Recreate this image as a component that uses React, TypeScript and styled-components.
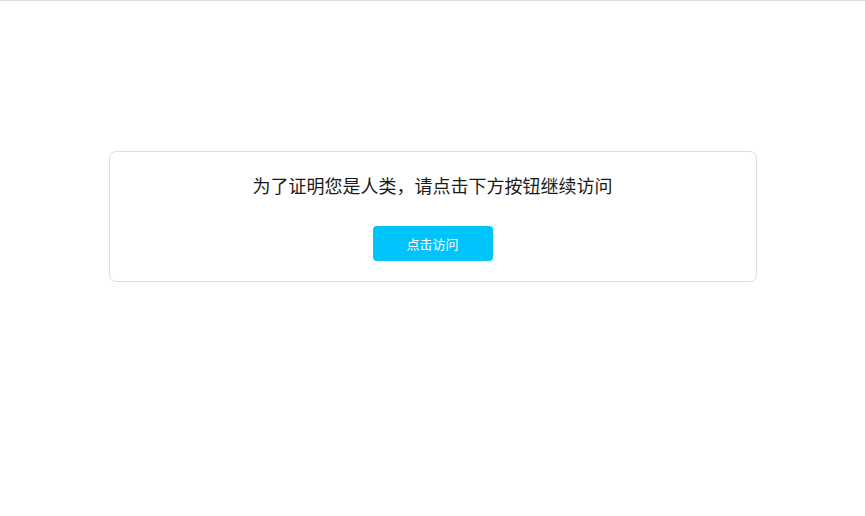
import React from 'react';
import styled, { createGlobalStyle } from 'styled-components';

const GlobalStyle = createGlobalStyle`
  html, body {
    margin: 0;
    padding: 0;
    background: #fff;
  }
  body {
    font-family: "Noto Sans CJK SC", "Noto Sans", sans-serif;
    border-top: 1px solid #dcdcdc;
  }
`;

const Page = styled.div`
  display: flex;
  justify-content: center;
  padding-top: 150px;
  height: 515px;
  box-sizing: border-box;
`;

const Card = styled.div`
  width: 648px;
  height: 131px;
  box-sizing: border-box;
  border: 1px solid #dedede;
  border-radius: 7px;
  display: flex;
  flex-direction: column;
  align-items: center;
  padding-top: 20px;
`;

const Message = styled.p`
  margin: 0;
  font-size: 18px;
  line-height: 26px;
  color: #1a1a1a;
`;

const VisitButton = styled.button`
  margin-top: 28px;
  width: 120px;
  height: 35px;
  border: none;
  border-radius: 4px;
  background: #00c3fb;
  color: #fff;
  font-family: "Noto Sans CJK SC", sans-serif;
  font-size: 13px;
  cursor: pointer;
`;

export default function App() {
  return (
    <>
      <GlobalStyle />
      <Page>
        <Card>
          <Message>为了证明您是人类，请点击下方按钮继续访问</Message>
          <VisitButton>点击访问</VisitButton>
        </Card>
      </Page>
    </>
  );
}
